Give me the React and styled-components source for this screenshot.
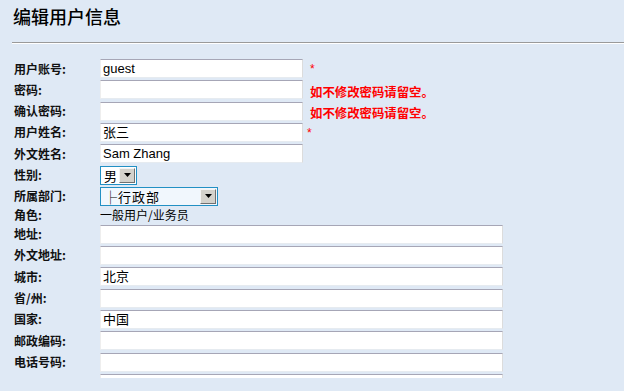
import React from "react";
import styled, { createGlobalStyle } from "styled-components";

const GlobalStyle = createGlobalStyle`
  html, body {
    margin: 0;
    padding: 0;
    background: #dfe9f5;
    font-family: "Liberation Sans", "Noto Sans CJK SC", sans-serif;
  }
`;

const Page = styled.div`
  padding: 0 0 0 12px;
  height: 391px;
  overflow: hidden;
  box-sizing: border-box;
`;

const Title = styled.h1`
  margin: 0;
  padding: 6px 0 0 1px;
  font-family: "Noto Sans CJK SC", sans-serif;
  font-size: 18px;
  line-height: 20px;
  font-weight: 500;
  color: #000;
`;

const Rule = styled.div`
  margin-top: 16px;
  height: 0;
  border-top: 1px solid #9a9a9a;
  border-bottom: 1px solid #ffffff;
`;

const Form = styled.div`
  margin-top: 15px;
  padding-left: 2px;
  height: 319px;
  overflow: hidden;
  display: flex;
  flex-direction: column;
  gap: 2.33px;
`;

const Row = styled.div`
  display: flex;
  align-items: center;
  height: ${(p) => p.$h || 19}px;
  flex-shrink: 0;
`;

const Label = styled.div`
  width: 86px;
  flex-shrink: 0;
  font-family: "Noto Sans CJK SC", sans-serif;
  font-size: 12px;
  font-weight: 700;
  color: #111;
  line-height: 14px;
`;

const Input = styled.div`
  box-sizing: border-box;
  width: ${(p) => (p.$long ? 403 : 203)}px;
  height: 19px;
  background: #fff;
  border-top: 1px solid #a6a6b6;
  border-right: 1px solid #dcdcdc;
  border-bottom: 1px solid #e6ebf0;
  border-left: 1px solid #eeeeee;
  padding: 0 2px;
  font-family: "Liberation Sans", "Noto Sans CJK SC", sans-serif;
  font-size: 13px;
  line-height: 17px;
  color: #000;
  white-space: nowrap;
  overflow: hidden;
`;

const Star = styled.span`
  color: #f00;
  font-size: 12px;
  line-height: 12px;
  margin-left: ${(p) => p.$ml || 7}px;
  align-self: flex-start;
  margin-top: 4px;
`;

const Hint = styled.span`
  color: #f00;
  font-family: "Noto Sans CJK SC", sans-serif;
  font-weight: 700;
  font-size: 12.4px;
  margin-left: 7px;
  margin-top: 4px;
`;

const Select = styled.div`
  box-sizing: border-box;
  width: ${(p) => p.$w}px;
  height: 19px;
  border: 1px solid #2290c4;
  background: ${(p) => p.$bg || "#fff"};
  display: flex;
  align-items: center;
  justify-content: space-between;
  padding: 0 1px 0 3px;
  font-family: "Noto Sans CJK SC", sans-serif;
  font-size: 13px;
  line-height: 17px;
  color: #000;
`;

const SelectText = styled.span`
  letter-spacing: ${(p) => p.$ls || 0}px;
`;

const DropButton = styled.div`
  box-sizing: border-box;
  width: 16px;
  height: 15px;
  background: #d4d2cc;
  border-top: 1px solid #f4f4f4;
  border-left: 1px solid #f4f4f4;
  border-right: 1px solid #707070;
  border-bottom: 1px solid #707070;
  display: flex;
  align-items: center;
  justify-content: center;
`;

const Value = styled.div`
  font-family: "Noto Sans CJK SC", sans-serif;
  font-size: 12px;
  line-height: 14px;
  color: #000;
`;

const Arrow = () => (
  <svg width="7" height="4" viewBox="0 0 7 4">
    <polygon points="0,0 7,0 3.5,4" fill="#000" />
  </svg>
);

const shortFields = [
  { label: "用户账号:", value: "guest", star: true },
  { label: "密码:", value: "", hint: true },
  { label: "确认密码:", value: "", hint: true },
  { label: "用户姓名:", value: "张三", star: true, starMl: 4 },
  { label: "外文姓名:", value: "Sam Zhang" },
];

// last row sits at the bottom edge of the scroll area, only its top shows
const longFields = [
  { label: "地址:", value: "" },
  { label: "外文地址:", value: "" },
  { label: "城市:", value: "北京" },
  { label: "省/州:", value: "" },
  { label: "国家:", value: "中国" },
  { label: "邮政编码:", value: "" },
  { label: "电话号码:", value: "" },
  { label: "", value: "" },
];

const App = () => (
  <Page>
    <GlobalStyle />
    <Title>编辑用户信息</Title>
    <Rule />
    <Form>
      {shortFields.map((f) => (
        <Row key={f.label}>
          <Label>{f.label}</Label>
          <Input>{f.value}</Input>
          {f.star && <Star $ml={f.starMl}>*</Star>}
          {f.hint && <Hint>如不修改密码请留空。</Hint>}
        </Row>
      ))}
      <Row>
        <Label>性别:</Label>
        <Select $w={37}>
          <span>男</span>
          <DropButton>
            <Arrow />
          </DropButton>
        </Select>
      </Row>
      <Row>
        <Label>所属部门:</Label>
        <Select $w={118} $bg="#f1f7fd">
          <SelectText $ls={1}>├行政部</SelectText>
          <DropButton>
            <Arrow />
          </DropButton>
        </Select>
      </Row>
      <Row $h={14}>
        <Label>角色:</Label>
        <Value>一般用户/业务员</Value>
      </Row>
      {longFields.map((f, i) => (
        <Row key={i}>
          <Label>{f.label}</Label>
          <Input $long>{f.value}</Input>
        </Row>
      ))}
    </Form>
  </Page>
);

export default App;
